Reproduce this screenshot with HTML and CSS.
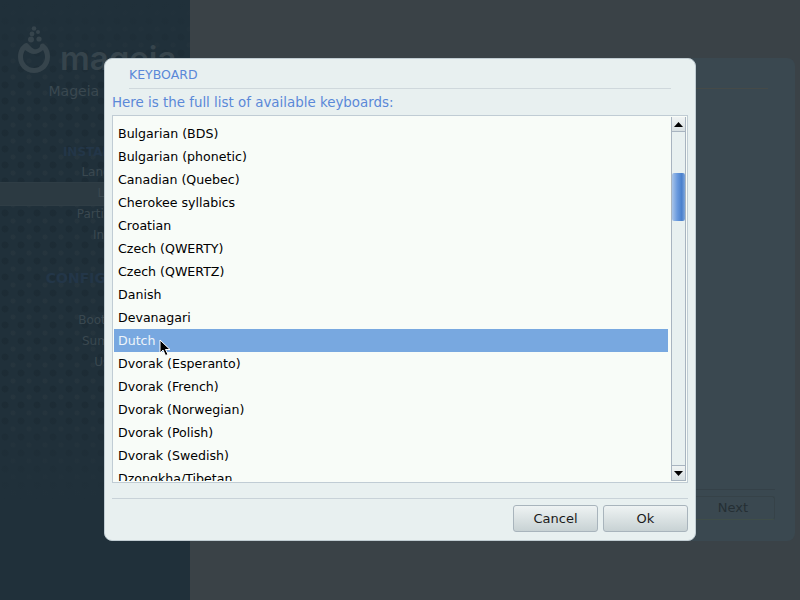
FILE: index.html
```html
<!DOCTYPE html>
<html lang="en">
	<head>
		<meta charset="UTF-8" />
		<title>Keyboard</title>
		<link rel="stylesheet" href="styles.css">
	</head>
	<body>
		<div class="desktop">
			<div class="sidebar">
				<div class="brand">
					<svg class="brand-mark" width="32" height="47" viewBox="0 0 32 47">
						<circle cx="16" cy="2.5" r="2.3" />
						<circle cx="20" cy="6" r="2" />
						<circle cx="14" cy="8" r="2.4" />
						<circle cx="13" cy="13.5" r="3" />
						<circle cx="21" cy="13" r="2.6" />
						<path d="M6 18 C2 21 0 25 0 31 C0 40 7 47 16 47 C25 47 32 40 32 31 C32 25 30 21 26 18 C24 17 22 18 22 20 C22 22 18 24 16 23 C13 22 11 18 9 17 C8 17 7 17 6 18 Z M7 24 C10 26 13 28 16 28 C19 28 23 26 25 24 C26 26 27 28 27 31 C27 37 22 42 16 42 C10 42 5 37 5 31 C5 28 6 26 7 24 Z" fill-rule="evenodd" />
					</svg>
					<span class="brand-name">mageia</span>
				</div>
				<div class="installer-title">Mageia 6 Installer</div>
				<div class="step-group">INSTALLATION</div>
				<div class="step">Language</div>
				<div class="step current">License</div>
				<div class="step">Partitioning</div>
				<div class="step">Install</div>
				<div class="step-group wide">CONFIGURATION</div>
				<div class="step">Bootloader</div>
				<div class="step">Summary</div>
				<div class="step">Users</div>
			</div>
			<div class="main">
				<div class="panel">
					<div class="panel-title"></div>
					<div class="panel-foot">
						<div class="ghost-btn">Next</div>
					</div>
				</div>
			</div>
		</div>

		<div class="dialog">
			<div class="title">KEYBOARD</div>
			<div class="prompt">Here is the full list of available keyboards:</div>
			<div class="listbox">
				<div class="rows">
					<div class="row">Bulgarian (BDS)</div>
					<div class="row">Bulgarian (phonetic)</div>
					<div class="row">Canadian (Quebec)</div>
					<div class="row">Cherokee syllabics</div>
					<div class="row">Croatian</div>
					<div class="row">Czech (QWERTY)</div>
					<div class="row">Czech (QWERTZ)</div>
					<div class="row">Danish</div>
					<div class="row">Devanagari</div>
					<div class="row selected">Dutch</div>
					<div class="row">Dvorak (Esperanto)</div>
					<div class="row">Dvorak (French)</div>
					<div class="row">Dvorak (Norwegian)</div>
					<div class="row">Dvorak (Polish)</div>
					<div class="row">Dvorak (Swedish)</div>
					<div class="row">Dzongkha/Tibetan</div>
				</div>
				<div class="scrollbar">
					<div class="arrow up"><svg width="9" height="5" viewBox="0 0 9 5"><path d="M4.5 0 L9 5 L0 5 Z" /></svg></div>
					<div class="track"><div class="thumb"></div></div>
					<div class="arrow down"><svg width="9" height="5" viewBox="0 0 9 5"><path d="M0 0 L9 0 L4.5 5 Z" /></svg></div>
				</div>
			</div>
			<div class="separator"></div>
			<div class="buttons">
				<div class="btn">Cancel</div>
				<div class="btn">Ok</div>
			</div>
		</div>

		<svg class="cursor" width="13" height="18" viewBox="0 0 13 18">
			<path d="M1 1 L1 14 L4 11 L6.5 16.5 L9 15.5 L6.5 10.5 L11 10.5 Z" fill="#000" stroke="#fff" stroke-width="1" />
		</svg>
	</body>
</html>
```
FILE: styles.css
```css
body,
html {
	margin: 0;
	padding: 0;
}
body {
	width: 800px;
	height: 600px;
	position: relative;
	overflow: hidden;
	background: #3a4247;
	font-family: "DejaVu Sans", sans-serif;
	font-size: 12px;
}

/* installer behind the dialog */
.desktop {
	display: flex;
	height: 600px;
}
.sidebar {
	width: 190px;
	box-sizing: border-box;
	padding: 26px 0 0 32px;
	text-align: center;
	color: #3a4850;
	background-color: #20303a;
	background-image: linear-gradient(#20303a 0, rgba(32, 48, 58, 0.45) 90px, rgba(32, 48, 58, 0.45) 400px, #20303a 500px),
		radial-gradient(circle at 5px 5px, #1a2831 3px, transparent 4px),
		radial-gradient(circle at 13px 13px, #2a3840 2px, transparent 3px);
	background-size: 100% 100%, 16px 16px, 16px 16px;
}
.brand {
	display: flex;
	align-items: flex-start;
	gap: 10px;
	margin-left: -14px;
	height: 47px;
	color: #36444c;
	white-space: nowrap;
}
.brand-mark {
	fill: #36444c;
	flex: none;
}
.brand-name {
	font-family: Inter, sans-serif;
	font-size: 33px;
	font-weight: 600;
	line-height: 38px;
	margin-top: 13px;
}
.installer-title {
	margin-top: 8px;
	font-size: 14px;
	line-height: 20px;
}
.step-group {
	margin-top: 41px;
	font-size: 12px;
	font-weight: bold;
	line-height: 20px;
	color: #233648;
}
.step-group.wide {
	margin: 22px 0;
	font-size: 14px;
}
.step {
	font-size: 12px;
	line-height: 21px;
}
.step.current {
	margin: -1px 0 -2px -32px;
	padding: 0 0 1px 50px;
	background: #2c3a42;
	border-top: 1px solid #2f3d45;
	border-bottom: 1px solid #2f3d45;
}
.main {
	flex: 1;
	padding: 58px 5px 59px 0;
	display: flex;
}
.panel {
	flex: 1;
	background: #3a4850;
	border-radius: 0 8px 8px 0;
	display: flex;
	flex-direction: column;
	justify-content: space-between;
}
.panel-title {
	height: 30px;
	border-bottom: 1px solid #454a48;
	margin-right: 27px;
}
.panel-foot {
	display: flex;
	justify-content: flex-end;
	margin: 0 20px 21px 0;
	border-top: 1px solid #354148;
}
.ghost-btn {
	margin-top: 6px;
	width: 82px;
	height: 22px;
	line-height: 22px;
	text-align: center;
	font-size: 13px;
	color: #252f34;
	border: 1px solid #364248;
	border-bottom-color: #3f4d48;
	border-radius: 3px;
}

/* keyboard dialog */
.dialog {
	position: absolute;
	left: 104px;
	top: 58px;
	width: 592px;
	height: 483px;
	box-sizing: border-box;
	padding: 8px 7px;
	background: #e8f0f0;
	border: 1px solid #c0ccd2;
	border-radius: 8px;
	display: flex;
	flex-direction: column;
}
.title {
	margin: 0 17px;
	padding: 0 0 6px 0;
	height: 15px;
	line-height: 15px;
	font-size: 12.5px;
	color: #5a88d8;
	border-bottom: 1px solid #cfd8dc;
}
.prompt {
	margin-top: 5px;
	height: 21px;
	line-height: 18px;
	font-size: 13.4px;
	color: #5a88d8;
}
.listbox {
	display: flex;
	height: 368px;
	flex: none;
	box-sizing: border-box;
	border: 1px solid #c0ccd4;
	background: #f8fcf8;
	padding: 1px;
}
.rows {
	width: 554px;
	flex: none;
	overflow: hidden;
	padding-top: 5px;
	color: #000;
}
.row {
	height: 23px;
	line-height: 23px;
	padding-left: 4px;
	font-size: 12.6px;
}
.row.selected {
	background: #78a8e0;
	color: #eef4fa;
}
.scrollbar {
	margin-left: 3px;
	width: 13px;
	flex: none;
	display: flex;
	flex-direction: column;
	background: #e8f0f0;
	border-left: 1px solid #a8b4c0;
	border-right: 1px solid #a8b4c0;
}
.arrow {
	height: 14px;
	display: flex;
	align-items: center;
	justify-content: center;
	background: linear-gradient(#f0f4f4, #d8e0e2);
	border-bottom: 1px solid #a8b4c0;
}
.arrow.down {
	border-top: 1px solid #a8b4c0;
}
.track {
	flex: 1;
	padding-top: 41px;
}
.thumb {
	height: 48px;
	border-radius: 2px;
	background: linear-gradient(90deg, #a8c4e8, #6a9ade 40%, #4a80cc 75%, #80a8dc);
}
.separator {
	margin-top: 15px;
	height: 1px;
	background: #c8d2d8;
}
.buttons {
	display: flex;
	justify-content: flex-end;
	gap: 5px;
	margin-top: 6px;
}
.btn {
	width: 85px;
	height: 27px;
	box-sizing: border-box;
	line-height: 25px;
	text-align: center;
	font-size: 13px;
	color: #1a1a1a;
	border: 1px solid #a8b4bc;
	border-radius: 3px;
	background: linear-gradient(#eef3f3, #c8d2d4);
}

.cursor {
	position: absolute;
	left: 159px;
	top: 339px;
}
```
